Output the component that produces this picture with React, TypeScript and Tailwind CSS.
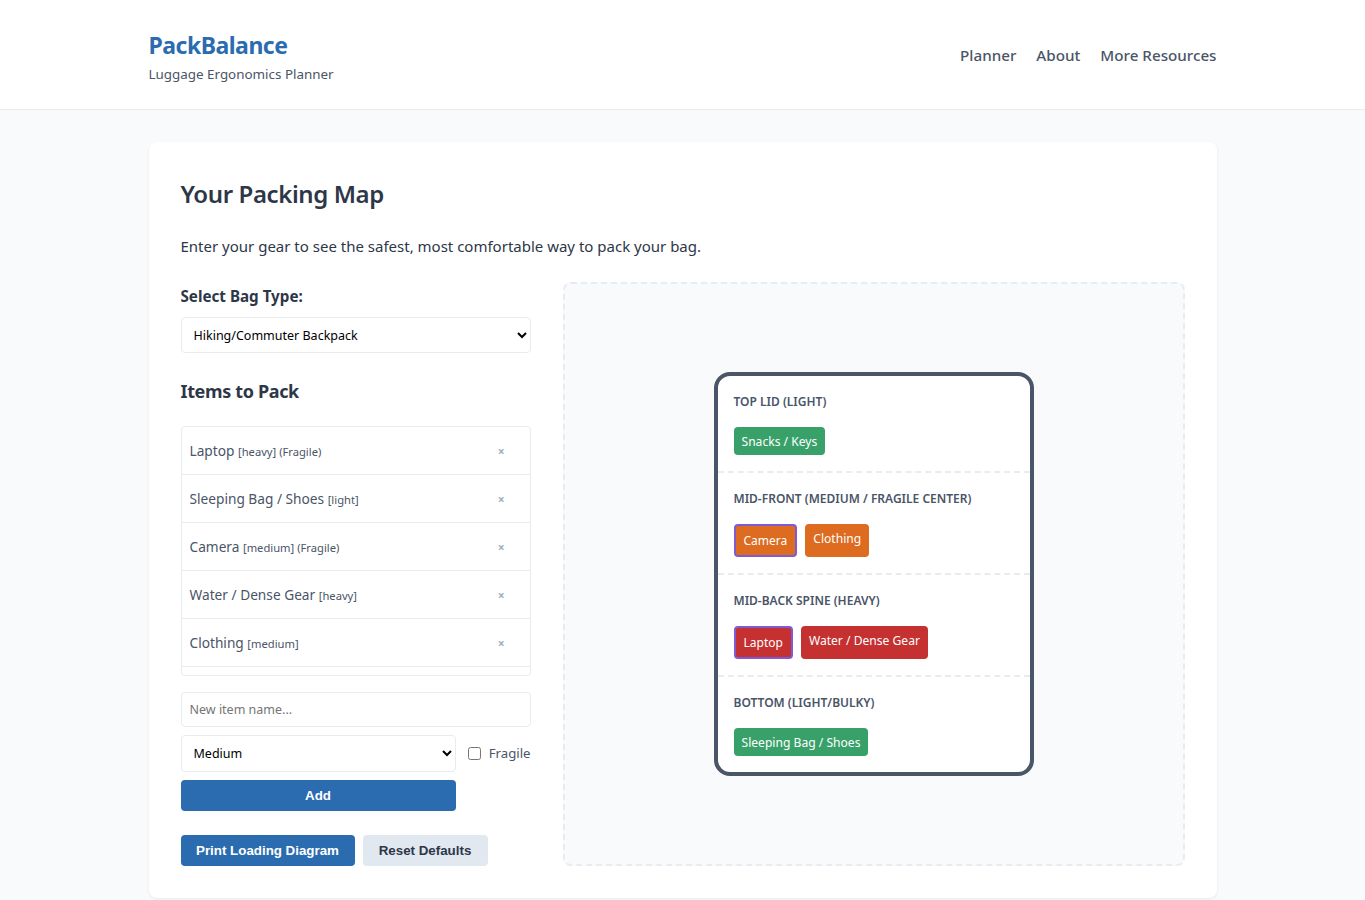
import React from "react";

const items = [
  { name: "Laptop", weight: "heavy", fragile: true },
  { name: "Sleeping Bag / Shoes", weight: "light", fragile: false },
  { name: "Camera", weight: "medium", fragile: true },
  { name: "Water / Dense Gear", weight: "heavy", fragile: false },
  { name: "Clothing", weight: "medium", fragile: false },
];

const zones = [
  {
    label: "Top Lid (Light)",
    chips: [{ name: "Snacks / Keys", color: "bg-[#38a169]", fragile: false }],
  },
  {
    label: "Mid-Front (Medium / Fragile Center)",
    chips: [
      { name: "Camera", color: "bg-[#dd6b20]", fragile: true },
      { name: "Clothing", color: "bg-[#dd6b20]", fragile: false },
    ],
  },
  {
    label: "Mid-Back Spine (Heavy)",
    chips: [
      { name: "Laptop", color: "bg-[#c53030]", fragile: true },
      { name: "Water / Dense Gear", color: "bg-[#c53030]", fragile: false },
    ],
  },
  {
    label: "Bottom (Light/Bulky)",
    chips: [{ name: "Sleeping Bag / Shoes", color: "bg-[#38a169]", fragile: false }],
  },
];

export default function App() {
  return (
    <div className="min-h-screen bg-[#f8fafc] font-['Noto_Sans',sans-serif] text-[#2d3748]">
      {/* Header */}
      <header className="h-[110px] bg-white border-b border-[#e8ecf1]">
        <div className="w-[1068px] mx-auto h-full flex items-center justify-between">
          <div>
            <h1 className="text-[23px] font-bold tracking-[-0.5px] leading-[29px] mt-[4px] text-[#2b6cb0]">PackBalance</h1>
            <p className="mt-[5px] text-[13.4px] leading-[18px] text-[#4a5568]">Luggage Ergonomics Planner</p>
          </div>
          <nav className="flex gap-5 mt-[2px] text-[15.2px] font-medium text-[#4a5568]">
            <a>Planner</a>
            <a>About</a>
            <a>More Resources</a>
          </nav>
        </div>
      </header>

      {/* Main card */}
      <main className="w-[1068px] mx-auto pt-8 pb-8">
        <section className="bg-white rounded-lg shadow-[0_1px_3px_rgba(0,0,0,0.08)] p-8 h-[756px]">
          <h2 className="text-2xl font-semibold tracking-[-0.4px] leading-[29px] mt-[5px]">Your Packing Map</h2>
          <p className="mt-[26px] text-[15px] leading-[24px]">
            Enter your gear to see the safest, most comfortable way to pack your bag.
          </p>

          <div className="mt-6 flex gap-8">
            {/* Inputs */}
            <div className="w-[350px] shrink-0">
              <label className="block text-[15.2px] font-bold leading-[20px] mt-[4px]">Select Bag Type:</label>
              <select className="mt-[11px] block w-full h-[36px] pl-2 pr-1 bg-white border border-[#e8ecf1] rounded text-[12.5px] text-black">
                <option>Hiking/Commuter Backpack</option>
              </select>

              <h3 className="mt-[25px] text-lg font-bold tracking-[-0.35px] leading-[26px]">Items to Pack</h3>

              <div className="mt-[22px] h-[250px] overflow-hidden border border-[#e8ecf1] rounded">
                {items.map((item) => (
                  <div key={item.name} className="h-[48px] pt-[2px] flex items-center justify-between pl-2 pr-[25px] border-b border-[#e8ecf1]">
                    <span className="text-[13.7px] text-[#4a5568]">
                      {item.name}{" "}
                      <span className="text-[11.2px]">
                        [{item.weight}]{item.fragile ? " (Fragile)" : ""}
                      </span>
                    </span>
                    <span className="text-xs font-bold text-[#a0aec0]">×</span>
                  </div>
                ))}
              </div>

              <input
                placeholder="New item name..."
                className="mt-4 block w-full h-[35px] px-2 bg-white border border-[#e8ecf1] rounded text-[12.5px] placeholder:text-[#757575]"
              />

              <div className="mt-2 flex items-center justify-between">
                <select className="w-[275px] h-[37px] pl-2 pr-1 bg-white border border-[#e8ecf1] rounded text-[12.5px] text-black">
                  <option>Medium</option>
                </select>
                <label className="flex items-center gap-2 text-[13.2px] text-[#4a5568]">
                  <input type="checkbox" className="w-[13px] h-[13px]" />
                  Fragile
                </label>
              </div>

              <button className="mt-2 block w-[275px] h-[31px] bg-[#2b6cb0] rounded text-white text-[13.33px] font-bold font-['Liberation_Sans',sans-serif]">
                Add
              </button>

              <div className="mt-6 flex gap-2">
                <button className="w-[174px] h-[31px] bg-[#2b6cb0] rounded text-white text-[13.33px] font-bold font-['Liberation_Sans',sans-serif]">
                  Print Loading Diagram
                </button>
                <button className="w-[125px] h-[31px] bg-[#e2e8f0] rounded text-[#2d3748] text-[13.33px] font-bold font-['Liberation_Sans',sans-serif]">
                  Reset Defaults
                </button>
              </div>
            </div>

            {/* Diagram */}
            <div className="flex-1 h-[584px] flex items-center justify-center bg-[#f8fafc] border-2 border-dashed border-[#e8ecf1] rounded-lg">
              <div className="w-[320px] bg-white border-4 border-[#4a5568] rounded-2xl">
                {zones.map((zone, i) => (
                  <div key={zone.label} className={i < zones.length - 1 ? "p-4 border-b-2 border-dashed border-[#e8ecf1]" : "p-4"}>
                    <div className="text-xs font-semibold uppercase leading-[19px] text-[#4a5568]">{zone.label}</div>
                    <div className="mt-4 flex gap-2">
                      {zone.chips.map((chip) => (
                        <span
                          key={chip.name}
                          className={
                            chip.fragile
                              ? `${chip.color} px-2 py-1 rounded text-[12px] leading-[21px] text-white border-2 border-[#805ad5]`
                              : `${chip.color} px-2 pt-[5px] pb-[3px] rounded text-[12.1px] leading-[20px] text-white`
                          }
                        >
                          {chip.name}
                        </span>
                      ))}
                    </div>
                  </div>
                ))}
              </div>
            </div>
          </div>
        </section>
      </main>
    </div>
  );
}
